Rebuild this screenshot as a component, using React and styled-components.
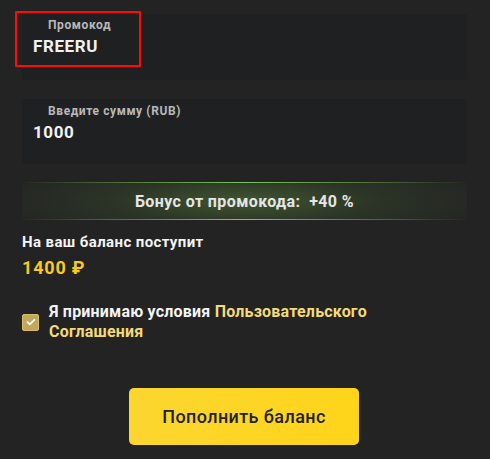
import React from 'react'
import styled, { createGlobalStyle } from 'styled-components'

const Global = createGlobalStyle`
  html, body {
    margin: 0;
    padding: 0;
    background: #232323;
  }
  body {
    font-family: 'Roboto', 'Noto Sans', sans-serif;
  }
`

const Page = styled.div`
  width: 490px;
  height: 459px;
  box-sizing: border-box;
  padding: 14px 23px 0 22px;
  display: flex;
  flex-direction: column;
  position: relative;
  overflow: hidden;
`

const Field = styled.div`
  height: ${p => p.h}px;
  background: #1f2022;
  border-radius: 2px;
  box-sizing: border-box;
  padding: ${p => p.pt}px 0 0 11px;
  margin-bottom: ${p => p.mb}px;
  display: flex;
  flex-direction: column;
`

const Label = styled.div`
  font-size: 12px;
  font-weight: 700;
  color: #b9b9b9;
  line-height: 14px;
  padding-left: 15px;
  letter-spacing: 0.6px;
`

const Value = styled.div`
  font-size: 17px;
  font-weight: 700;
  color: #f2f2f2;
  line-height: 20px;
  margin-top: 4px;
  letter-spacing: 0.6px;
`

const Highlight = styled.div`
  position: absolute;
  left: 15px;
  top: 11px;
  width: 122px;
  height: 52px;
  border: 2px solid #ff0a0a;
  border-radius: 1px;
`

const Bonus = styled.div`
  height: 38px;
  box-sizing: border-box;
  display: flex;
  align-items: center;
  justify-content: center;
  font-size: 16px;
  font-weight: 700;
  color: #e6e6e6;
  letter-spacing: 0.4px;
  position: relative;
  background: radial-gradient(ellipse 60% 120% at 50% 50%, rgba(88, 128, 58, 0.55) 0%, rgba(60, 90, 45, 0.3) 50%, rgba(35, 35, 35, 0) 100%);
  &::before, &::after {
    content: '';
    position: absolute;
    left: 0;
    right: 0;
    height: 1px;
    background: linear-gradient(90deg, rgba(110, 180, 70, 0) 0%, #7cc757 50%, rgba(110, 180, 70, 0) 100%);
  }
  &::before { top: 0; }
  &::after { bottom: 0; }
`

const Receive = styled.div`
  margin-top: 12px;
  font-size: 15px;
  font-weight: 700;
  color: #f4f4f4;
  line-height: 20px;
  letter-spacing: 0.4px;
`

const Amount = styled.div`
  margin-top: 5px;
  font-size: 18px;
  font-weight: 700;
  color: #f9c91d;
  line-height: 22px;
  letter-spacing: 0.8px;
`

const Agree = styled.div`
  margin-top: 23px;
  display: flex;
  align-items: center;
  gap: 10px;
`

const Check = styled.div`
  width: 17px;
  height: 17px;
  border-radius: 2px;
  background: #c2a85a;
  border: 1px solid #d8bb68;
  box-sizing: border-box;
  display: flex;
  align-items: center;
  justify-content: center;
  flex-shrink: 0;
`

const AgreeText = styled.div`
  font-size: 16px;
  font-weight: 700;
  color: #f4f4f4;
  line-height: 20px;
  letter-spacing: 0.2px;
  width: 340px;
`

const Link = styled.span`
  color: #f3da7a;
`

const ButtonRow = styled.div`
  margin-top: 46px;
  display: flex;
  justify-content: center;
  padding-right: 1px;
`

const Button = styled.button`
  width: 230px;
  height: 57px;
  border: 0;
  border-radius: 5px;
  background: linear-gradient(90deg, #fcd630 0%, #ffd41a 100%);
  color: #222;
  font-family: 'Roboto', sans-serif;
  font-size: 18px;
  font-weight: 500;
  letter-spacing: 0.4px;
  cursor: pointer;
`

const App = () => {
  return (
    <>
      <Global />
      <Page>
        <Field h={66} pt={4} mb={19}>
          <Label>Промокод</Label>
          <Value>FREERU</Value>
        </Field>
        <Field h={65} pt={5} mb={18}>
          <Label>Введите сумму (RUB)</Label>
          <Value>1000</Value>
        </Field>
        <Bonus>Бонус от промокода:&nbsp; +40 %</Bonus>
        <Receive>На ваш баланс поступит</Receive>
        <Amount>1400 ₽</Amount>
        <Agree>
          <Check>
            <svg width="10" height="8" viewBox="0 0 10 8">
              <path d="M1.5 4.2 L3.8 6.3 L8.5 1.6" fill="none" stroke="#fff" strokeWidth="1.8" strokeLinecap="round" strokeLinejoin="round" />
            </svg>
          </Check>
          <AgreeText>
            Я принимаю условия <Link>Пользовательского Соглашения</Link>
          </AgreeText>
        </Agree>
        <ButtonRow>
          <Button>Пополнить баланс</Button>
        </ButtonRow>
        <Highlight />
      </Page>
    </>
  )
}

export default App
